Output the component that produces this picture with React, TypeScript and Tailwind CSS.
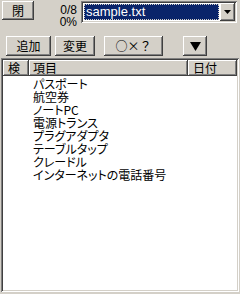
import React from 'react';

const raised =
  'bg-[#d4d0c8] shadow-[inset_-1px_-1px_#404040,inset_1px_1px_#ffffff,inset_-2px_-2px_#808080,inset_2px_2px_#d4d0c8]';
const sunken =
  'shadow-[inset_1px_1px_#808080,inset_-1px_-1px_#ffffff,inset_2px_2px_#404040,inset_-2px_-2px_#d4d0c8]';

const items = [
  'パスポート',
  '航空券',
  'ノートPC',
  '電源トランス',
  'プラグアダプタ',
  'テーブルタップ',
  'クレードル',
  'インターネットの電話番号',
];

const Btn: React.FC<{ w: string; children: React.ReactNode }> = ({ w, children }) => (
  <button className={`${raised} ${w} h-[20px] flex items-center justify-center leading-none`}>
    {children}
  </button>
);

export default function App() {
  return (
    <div
      className="w-[240px] h-[294px] bg-[#d4d0c8] flex flex-col text-[12px] text-black"
      style={{ fontFamily: '"Noto Sans CJK JP", "Liberation Sans", sans-serif' }}
    >
      {/* top row: close, counter, file combo */}
      <div className="flex items-start pt-[1px] pl-[2px] h-[36px]">
        <button className={`${raised} w-[32px] h-[19px] flex items-center justify-center leading-none`}>
          閉
        </button>
        <div className="w-[43px] flex flex-col items-end pt-[3px] text-[12px] leading-[12px] font-['Liberation_Sans']">
          <span>0/8</span>
          <span>0%</span>
        </div>
        <div className={`ml-[4px] w-[156px] h-[22px] bg-white p-[2px] flex ${sunken}`}>
          <div className="flex-1 p-[1px]">
            <div className="h-full bg-[#0a246a] outline-1 outline-dotted outline-[#d4d0c8] -outline-offset-1 text-white flex items-center pl-[2px] font-['Liberation_Sans'] text-[13px]">
              sample.txt
            </div>
          </div>
          <div className={`${raised} w-[15px] h-[18px] flex items-center justify-center`}>
            <svg width="7" height="4" viewBox="0 0 7 4">
              <polygon points="0,0 7,0 3.5,4" fill="#000" />
            </svg>
          </div>
        </div>
      </div>

      {/* action buttons */}
      <div className="flex items-start pl-[6px] h-[22px]">
        <Btn w="w-[45px]">追加</Btn>
        <div className="ml-[4px]">
          <Btn w="w-[40px]">変更</Btn>
        </div>
        <div className="ml-[9px]">
          <Btn w="w-[59px]">○×？</Btn>
        </div>
        <div className="ml-[20px]">
          <Btn w="w-[24px]">
            <svg width="11" height="9" viewBox="0 0 11 9">
              <polygon points="0,0 11,0 5.5,9" fill="#000" />
            </svg>
          </Btn>
        </div>
      </div>

      {/* list view */}
      <div className={`mx-[1px] mb-[2px] flex-1 bg-white p-[2px] flex flex-col ${sunken}`}>
        <div className="flex h-[16px] leading-[16px]">
          <div className={`${raised} w-[26px] pl-[5px]`}>検</div>
          <div className={`${raised} w-[159px] pl-[4px]`}>項目</div>
          <div className={`${raised} flex-1 pl-[5px]`}>日付</div>
        </div>
        <ul className="pt-[1px] pl-[30px] leading-[13px]" style={{ fontFeatureSettings: '"palt"' }}>
          {items.map((t) => (
            <li key={t} className="h-[13px]">{t}</li>
          ))}
        </ul>
      </div>
    </div>
  );
}
